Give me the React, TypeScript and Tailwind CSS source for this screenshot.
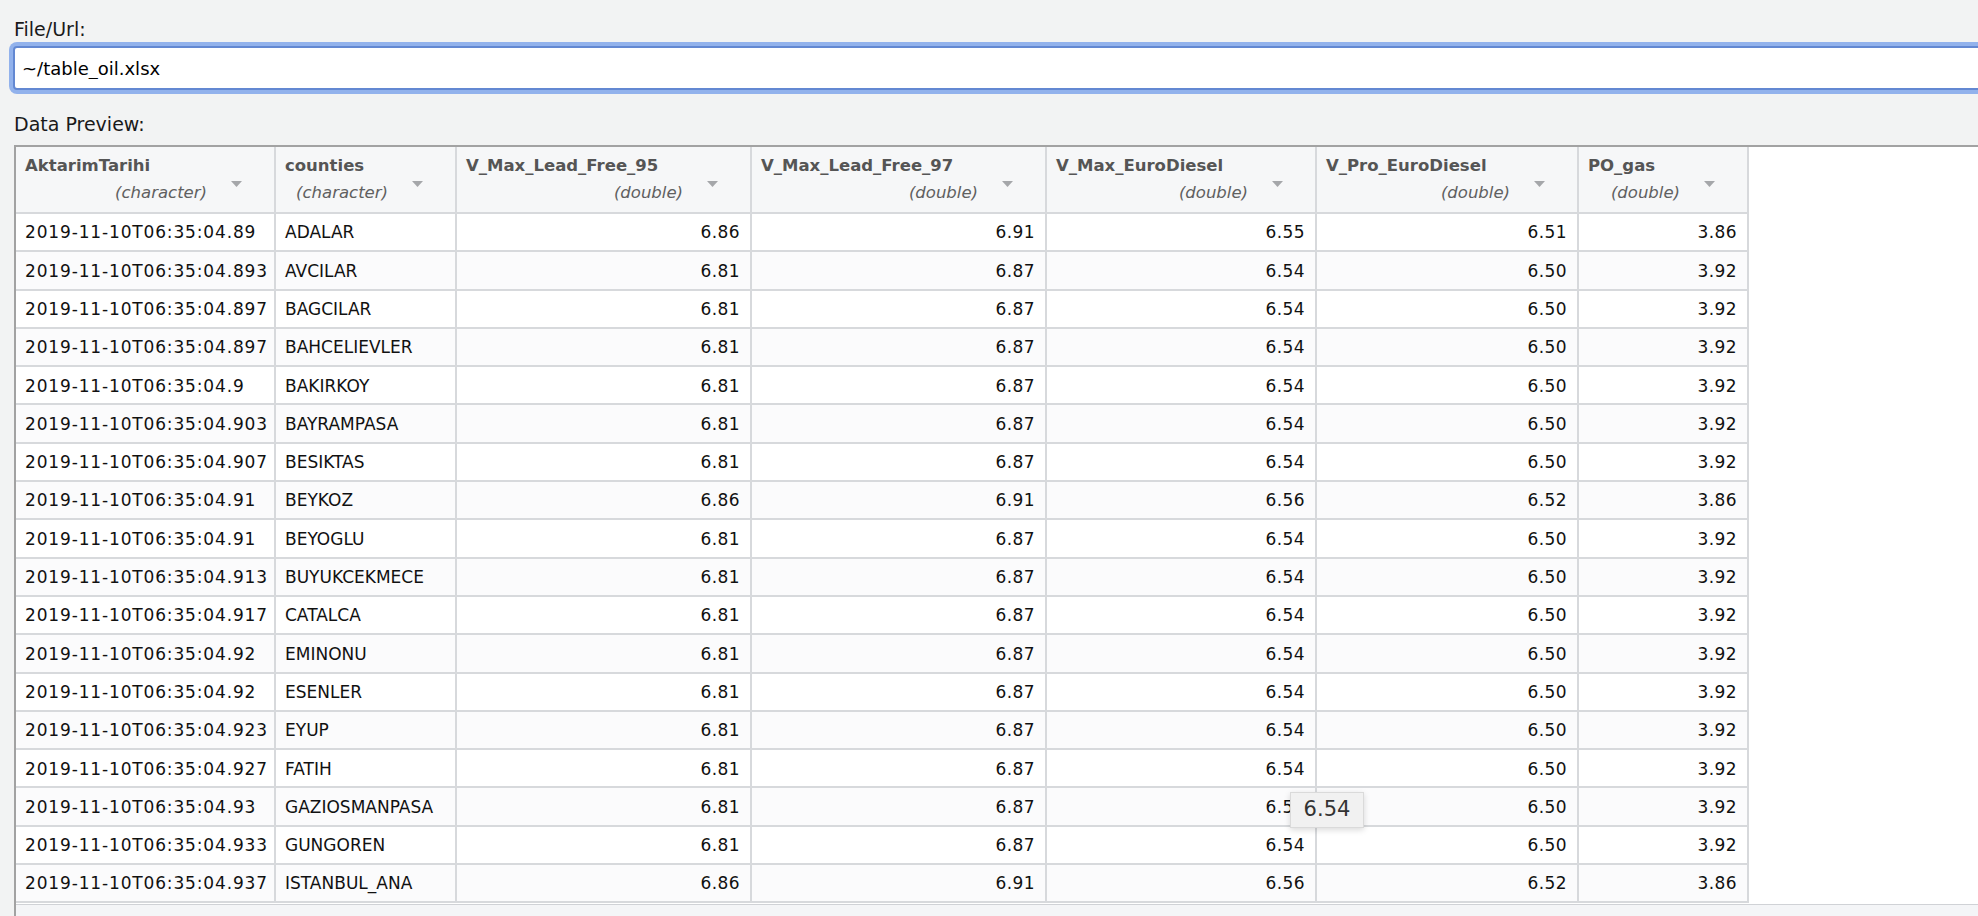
import React from "react";

const cols = [
  { name: "AktarimTarihi", type: "(character)", w: "w-[260px]", num: false },
  { name: "counties", type: "(character)", w: "w-[181px]", num: false },
  { name: "V_Max_Lead_Free_95", type: "(double)", w: "w-[295px]", num: true },
  { name: "V_Max_Lead_Free_97", type: "(double)", w: "w-[295px]", num: true },
  { name: "V_Max_EuroDiesel", type: "(double)", w: "w-[270px]", num: true },
  { name: "V_Pro_EuroDiesel", type: "(double)", w: "w-[262px]", num: true },
  { name: "PO_gas", type: "(double)", w: "w-[170px]", num: true },
];

const std = ["6.81", "6.87", "6.54", "6.50", "3.92"];
const hi = ["6.86", "6.91", "6.56", "6.52", "3.86"];

const rows: string[][] = [
  ["2019-11-10T06:35:04.89", "ADALAR", "6.86", "6.91", "6.55", "6.51", "3.86"],
  ["2019-11-10T06:35:04.893", "AVCILAR", ...std],
  ["2019-11-10T06:35:04.897", "BAGCILAR", ...std],
  ["2019-11-10T06:35:04.897", "BAHCELIEVLER", ...std],
  ["2019-11-10T06:35:04.9", "BAKIRKOY", ...std],
  ["2019-11-10T06:35:04.903", "BAYRAMPASA", ...std],
  ["2019-11-10T06:35:04.907", "BESIKTAS", ...std],
  ["2019-11-10T06:35:04.91", "BEYKOZ", ...hi],
  ["2019-11-10T06:35:04.91", "BEYOGLU", ...std],
  ["2019-11-10T06:35:04.913", "BUYUKCEKMECE", ...std],
  ["2019-11-10T06:35:04.917", "CATALCA", ...std],
  ["2019-11-10T06:35:04.92", "EMINONU", ...std],
  ["2019-11-10T06:35:04.92", "ESENLER", ...std],
  ["2019-11-10T06:35:04.923", "EYUP", ...std],
  ["2019-11-10T06:35:04.927", "FATIH", ...std],
  ["2019-11-10T06:35:04.93", "GAZIOSMANPASA", ...std],
  ["2019-11-10T06:35:04.933", "GUNGOREN", ...std],
  ["2019-11-10T06:35:04.937", "ISTANBUL_ANA", ...hi],
];

function SortArrow() {
  return (
    <svg width="11" height="6" viewBox="0 0 11 6" className="absolute right-[32px] top-[34px]">
      <path d="M0 0H11L5.5 6Z" fill="#a5a7aa" />
    </svg>
  );
}

export default function App() {
  return (
    <div className="relative h-screen overflow-hidden bg-[#f2f3f3] pl-[14px] pt-[19px] font-['DejaVu_Sans',sans-serif] text-[#1a1a1a]">
      <div className="text-[19px] leading-[20px]">File/Url:</div>
      <input
        readOnly
        value="~/table_oil.xlsx"
        className="-ml-px mt-[7px] block h-[44px] w-[calc(100%+40px)] rounded-[4px] border-2 border-[#6388d2] bg-white pl-[7px] text-[18px] text-black shadow-[0_0_0_4px_#92b2ec] outline-none"
      />
      <div className="mt-[24px] text-[19px] leading-[20px]">Data Preview:</div>

      <div className="mt-[11px] flex h-[771px] flex-col border-l-2 border-t-2 border-[#a2a2a2]">
        <div className="h-[758px] shrink-0 border-b border-[#d0d2d6] bg-white">
          <div className="flex">
            {cols.map((c) => (
              <div
                key={c.name}
                className={`relative h-[67px] shrink-0 border-b-2 border-r-2 border-[#d7d9dc] bg-[#f6f7f8] pl-[9px] pt-[9px] ${c.w}`}
              >
                <div className="text-[16.5px] font-bold leading-[20px] text-[#555]">{c.name}</div>
                <div className="mt-[7px] pr-[67px] text-right text-[16.5px] italic leading-[20px] text-[#606060]">
                  {c.type}
                </div>
                <SortArrow />
              </div>
            ))}
          </div>
          {rows.map((r, i) => (
            <div key={i} className={`flex w-fit ${i % 2 === 1 ? "bg-[#fbfbfc]" : "bg-white"}`}>
              {r.map((v, j) => (
                <div
                  key={j}
                  className={`flex h-[38.3px] shrink-0 items-center border-b-2 border-r-2 border-[#d7d9dc] pt-[2px] text-[17px] text-[#111] ${cols[j].w} ${
                    cols[j].num
                      ? "justify-end pr-[10px] tracking-[0.4px]"
                      : j === 0
                        ? "pl-[9px] tracking-[0.85px]"
                        : "pl-[9px]"
                  }`}
                >
                  {v}
                </div>
              ))}
            </div>
          ))}
        </div>
        <div className="flex-1 bg-[#f4f5f7]" />
      </div>

      <div className="absolute left-[1290px] top-[792px] flex h-[36px] w-[74px] items-center justify-center border border-[#dadada] bg-[#f1f1f1] text-[21px] text-[#333] shadow-[0_2px_6px_rgba(0,0,0,0.15)]">
        6.54
      </div>
    </div>
  );
}
